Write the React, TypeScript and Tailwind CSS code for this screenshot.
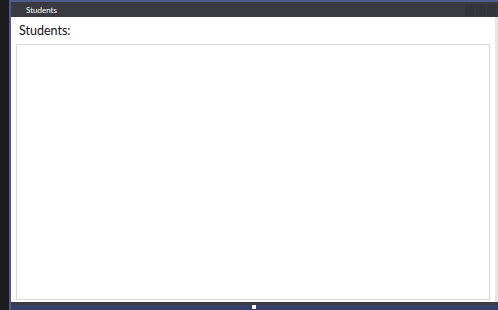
export default function App() {
  return (
    <div className="flex h-[310px] w-[498px] overflow-hidden bg-[#1c1b1d] font-['Lato','Open_Sans',sans-serif]">
      <div className="w-[9px] shrink-0 bg-[#1c1b1d]" />
      <div className="flex min-w-0 flex-1 flex-col border-l-2 border-t-2 border-[#4d5a8c] bg-[#2e2e38]">
        <div className="flex h-[15px] items-center justify-between bg-[#3a3a42] pl-[15px]">
          <span className="text-[8px] leading-none text-white">Students</span>
          <div className="flex h-full items-center gap-px pr-px">
            <div className="h-[12px] w-[10px] bg-[#34343c]" />
            <div className="h-[12px] w-[10px] bg-[#34343c]" />
            <div className="h-[12px] w-[10px] bg-[#34343c]" />
          </div>
        </div>
        <div className="flex min-h-0 flex-1 flex-col border-r-[3px] border-[#e6e6e6] bg-white px-[5px] pb-[2px]">
          <div className="pl-[3px] pt-[4px] text-[12.5px] leading-[20px] text-[#111]">Students:</div>
          <div className="mt-[3px] flex-1 border border-[#d9d9d9] bg-white" />
        </div>
        <div className="h-[3px] bg-[#3c3c44]" />
        <div className="relative h-[5px] bg-[#343f6c]">
          <div className="absolute left-[241px] top-0 h-[4px] w-[4px] bg-white" />
        </div>
      </div>
    </div>
  );
}
